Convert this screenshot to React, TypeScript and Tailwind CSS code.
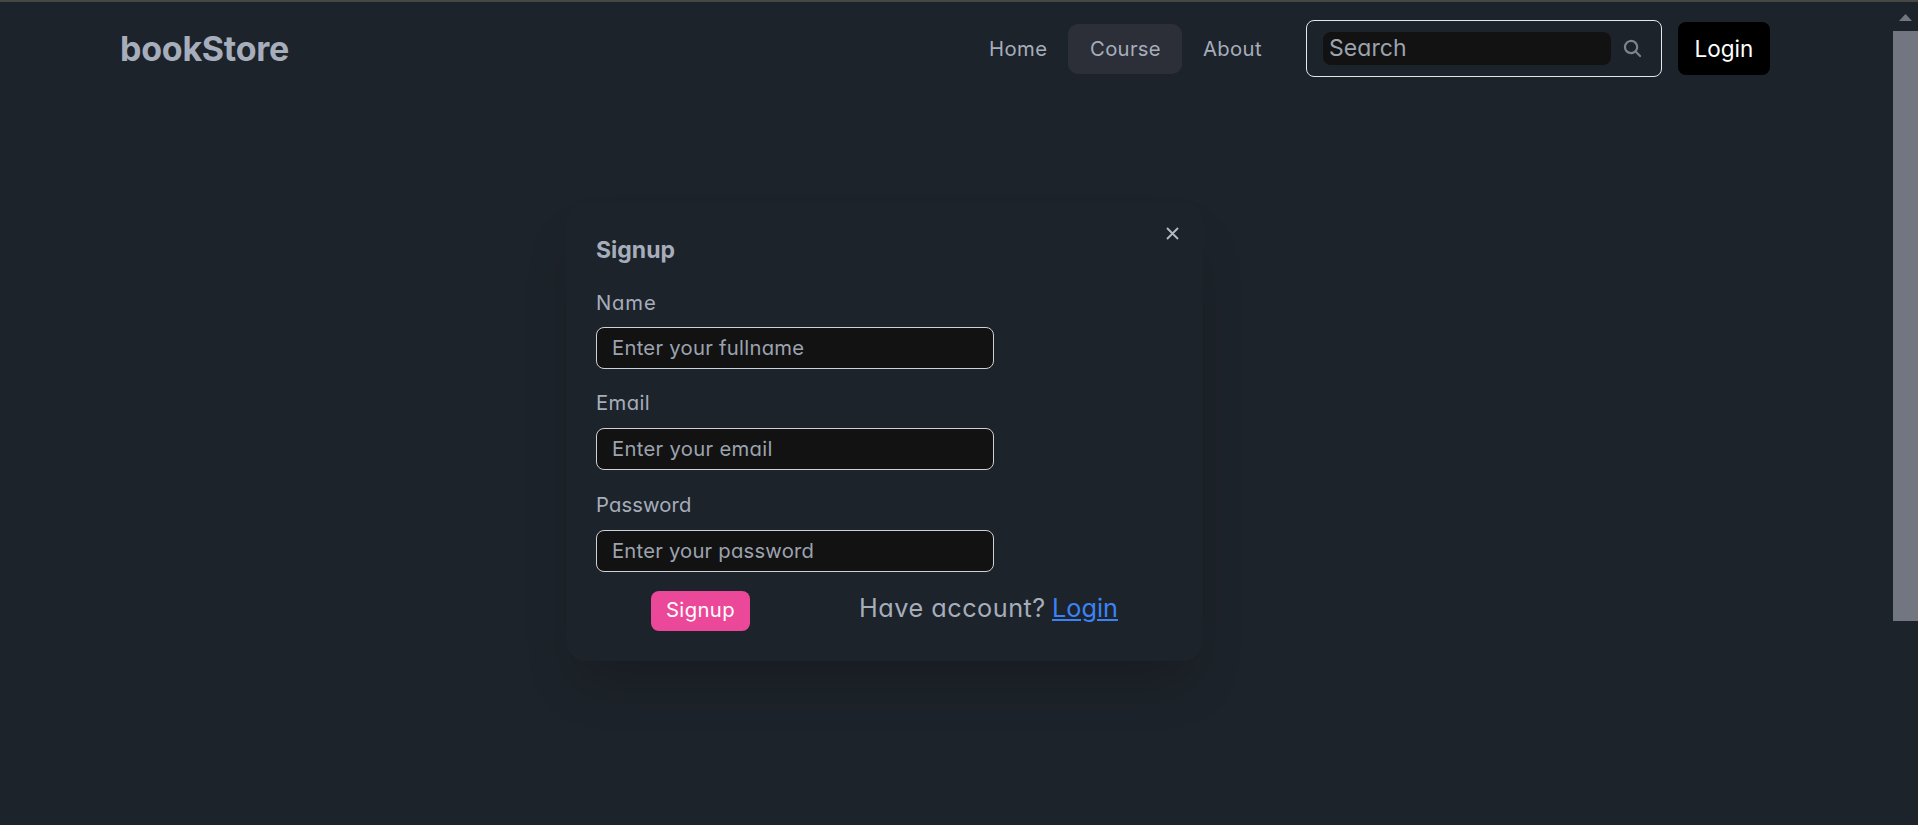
import React from "react";

type FieldProps = {
  label: string;
  type: string;
  placeholder: string;
  className: string;
  labelClass: string;
  inputClass: string;
};

function Field({ label, type, placeholder, className, labelClass, inputClass }: FieldProps) {
  return (
    <label className={`flex flex-col ${className}`}>
      <span className={`h-6 text-[20.25px] leading-6 ${labelClass}`}>{label}</span>
      <input
        type={type}
        placeholder={placeholder}
        className={`h-[42px] w-[398px] rounded-[8px] border border-[#d0d1d4] bg-[#121212] px-[15px] pb-[2px] text-[20.25px] outline-none placeholder:text-[#9ca3af] ${inputClass}`}
      />
    </label>
  );
}

function Header() {
  return (
    <header className="flex h-[93px] shrink-0 items-center pl-[120px]">
      <a className="w-[868px] text-[34px] leading-none font-bold tracking-[-0.25px]">bookStore</a>
      <nav className="flex items-center text-[20.25px]">
        <a className="w-20 pt-px pl-px tracking-[0.4px]">Home</a>
        <a className="flex h-[50px] w-[114px] items-center justify-center rounded-[10px] bg-[#2d2f38] pt-px pl-px tracking-[0.3px]">
          Course
        </a>
        <a className="w-[124px] pt-px pl-[21px] tracking-[0.35px]">About</a>
      </nav>
      <div className="flex h-[57px] w-[356px] items-center rounded-[8px] border border-[#e5e7eb] pl-4">
        <input
          type="text"
          placeholder="Search"
          className="h-[33px] w-[288px] rounded-[8px] bg-[#121212] px-[6px] text-[23px] tracking-[0.05px] outline-none placeholder:text-[#9ca3af]"
        />
        <svg viewBox="0 0 16 16" className="ml-[10px] h-[23px] w-[23px] fill-[#7c828e]">
          <path
            fillRule="evenodd"
            clipRule="evenodd"
            d="M9.965 11.026a5 5 0 1 1 1.06-1.06l2.755 2.754a.75.75 0 1 1-1.06 1.06l-2.755-2.754ZM10.5 7a3.5 3.5 0 1 1-7 0 3.5 3.5 0 0 1 7 0Z"
          />
        </svg>
      </div>
      <a className="ml-4 flex h-[53px] w-[92px] items-center justify-center rounded-[8px] bg-black text-[22.5px] text-white">
        Login
      </a>
    </header>
  );
}

function SignupCard() {
  return (
    <section className="mt-[107px] ml-[566px] flex h-[459px] w-[637px] flex-col rounded-[20px] bg-[#1d232a] pl-[30px] shadow-[0_31px_54px_-15px_rgba(0,0,0,0.22)]">
      <div className="flex h-[61px] items-start justify-between">
        <h3 className="mt-[34px] text-[23px] leading-7 font-bold">Signup</h3>
        <svg viewBox="0 0 13 13" className="mt-[25px] mr-6 h-[13px] w-[13px]">
          <path d="M1 1 12 12M12 1 1 12" fill="none" stroke="#b4b9c5" strokeWidth="1.9" />
        </svg>
      </div>
      <Field
        label="Name"
        type="text"
        placeholder="Enter your fullname"
        className="mt-7 gap-3"
        labelClass="tracking-[0.85px]"
        inputClass="tracking-[0.27px]"
      />
      <Field
        label="Email"
        type="email"
        placeholder="Enter your email"
        className="mt-[22px] gap-[13px]"
        labelClass="tracking-[0.4px]"
        inputClass="tracking-[0.3px]"
      />
      <Field
        label="Password"
        type="password"
        placeholder="Enter your password"
        className="mt-[23px] gap-[13px]"
        labelClass="tracking-[0.1px]"
        inputClass="tracking-[0.2px]"
      />
      <div className="mt-[19px] flex h-10 items-center pl-[55px]">
        <button className="h-10 w-[99px] rounded-[8px] bg-[#ec4899] pb-px text-[20.25px] text-white tracking-[0.4px]">
          Signup
        </button>
        <p className="ml-[109px] flex h-10 items-center pb-[4px] text-[25.25px] whitespace-pre">
          <span className="w-[193px] tracking-[0.5px]">Have account?</span>
          <a className="text-[#3b82f6] underline decoration-2 underline-offset-2">Login</a>
        </p>
      </div>
    </section>
  );
}

function Scrollbar() {
  return (
    <div className="flex w-[25px] shrink-0 flex-col items-center bg-[#1d232a]">
      <svg viewBox="0 0 13 7" className="mt-3 mb-[10px] h-[7px] w-[13px]">
        <path d="M6.5 0 13 7H0Z" fill="#717681" />
      </svg>
      <div className="h-[590px] w-full bg-[#717681]" />
    </div>
  );
}

export default function App() {
  return (
    <div className="flex h-[825px] w-[1918px] flex-col overflow-hidden border-t-2 border-[#474845] bg-[#1d232a] font-['Inter',sans-serif] text-[#a6adbb] [font-feature-settings:'cv11']">
      <div className="flex min-h-0 flex-1">
        <main className="flex min-w-0 flex-1 flex-col overflow-hidden">
          <Header />
          <SignupCard />
        </main>
        <Scrollbar />
      </div>
    </div>
  );
}
